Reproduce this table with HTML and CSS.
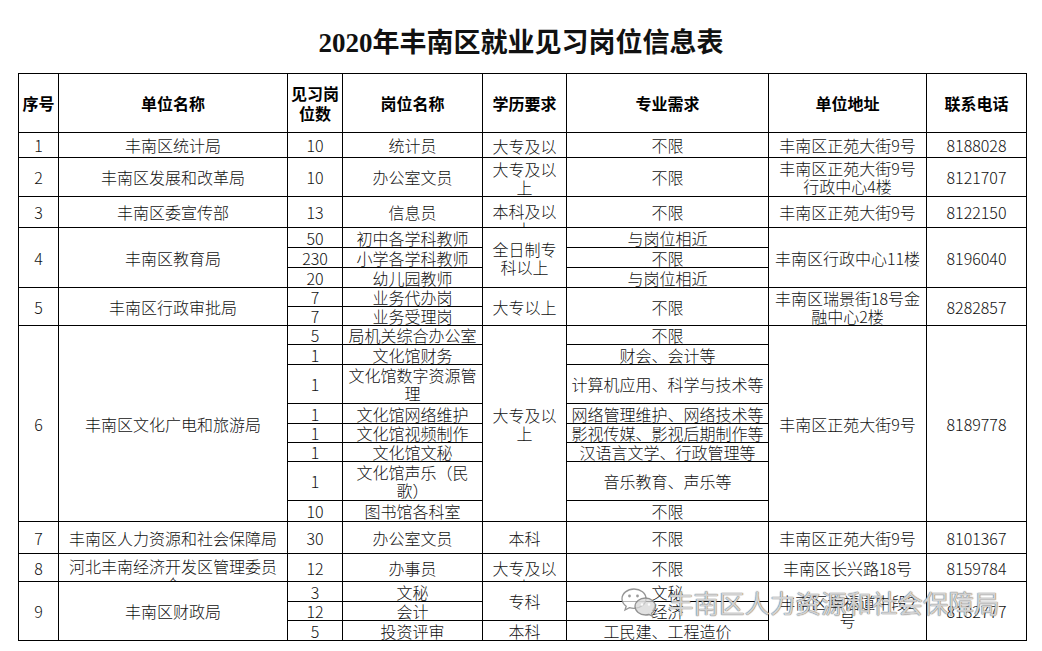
FILE: index.html
```html
<!DOCTYPE html>
<html lang="zh">
<head>
<meta charset="utf-8">
<title>2020年丰南区就业见习岗位信息表</title>
<link rel="stylesheet" href="styles.css">
</head>
<body>
<div class="page">
  <div class="title">2020年丰南区就业见习岗位信息表</div>
  <div class="sheet">
    <table>
      <colgroup>
        <col class="w-no"><col class="w-unit"><col class="w-num"><col class="w-pos"><col class="w-edu"><col class="w-major"><col class="w-addr"><col class="w-tel">
      </colgroup>
      <tr class="h59">
        <th>序号</th><th>单位名称</th><th>见习岗<br>位数</th><th>岗位名称</th><th>学历要求</th><th>专业需求</th><th>单位地址</th><th>联系电话</th>
      </tr>
      <tr class="h25">
        <td>1</td><td>丰南区统计局</td><td>10</td><td>统计员</td>
        <td><div class="clip c1">大专及以<br>上</div></td>
        <td>不限</td><td>丰南区正苑大街9号</td><td>8188028</td>
      </tr>
      <tr class="h39">
        <td>2</td><td>丰南区发展和改革局</td><td>10</td><td>办公室文员</td>
        <td><div class="clip c2">大专及以<br>上</div></td>
        <td>不限</td><td>丰南区正苑大街9号<br>行政中心4楼</td><td>8121707</td>
      </tr>
      <tr class="h31">
        <td>3</td><td>丰南区委宣传部</td><td>13</td><td>信息员</td>
        <td><div class="clip c3">本科及以<br>上</div></td>
        <td>不限</td><td>丰南区正苑大街9号</td><td>8122150</td>
      </tr>
      <tr class="h20">
        <td rowspan="3">4</td><td rowspan="3">丰南区教育局</td><td>50</td><td>初中各学科教师</td>
        <td rowspan="3">全日制专<br>科以上</td>
        <td>与岗位相近</td><td rowspan="3">丰南区行政中心11楼</td><td rowspan="3">8196040</td>
      </tr>
      <tr class="h20"><td>230</td><td>小学各学科教师</td><td>不限</td></tr>
      <tr class="h20"><td>20</td><td>幼儿园教师</td><td>与岗位相近</td></tr>
      <tr class="h19">
        <td rowspan="2">5</td><td rowspan="2">丰南区行政审批局</td><td>7</td><td>业务代办岗</td>
        <td rowspan="2">大专以上</td><td rowspan="2">不限</td>
        <td rowspan="2">丰南区瑞景街18号金<br>融中心2楼</td><td rowspan="2">8282857</td>
      </tr>
      <tr class="h19"><td>7</td><td>业务受理岗</td></tr>
      <tr class="h19">
        <td rowspan="8">6</td><td rowspan="8">丰南区文化广电和旅游局</td><td>5</td><td>局机关综合办公室</td>
        <td rowspan="8">大专及以<br>上</td>
        <td>不限</td><td rowspan="8">丰南区正苑大街9号</td><td rowspan="8">8189778</td>
      </tr>
      <tr class="h20"><td>1</td><td>文化馆财务</td><td>财会、会计等</td></tr>
      <tr class="h39"><td>1</td><td>文化馆数字资源管<br>理</td><td>计算机应用、科学与技术等</td></tr>
      <tr class="h20"><td>1</td><td>文化馆网络维护</td><td>网络管理维护、网络技术等</td></tr>
      <tr class="h19"><td>1</td><td>文化馆视频制作</td><td>影视传媒、影视后期制作等</td></tr>
      <tr class="h19"><td>1</td><td>文化馆文秘</td><td>汉语言文学、行政管理等</td></tr>
      <tr class="h39"><td>1</td><td>文化馆声乐（民<br>歌）</td><td>音乐教育、声乐等</td></tr>
      <tr class="h21"><td>10</td><td>图书馆各科室</td><td>不限</td></tr>
      <tr class="h32">
        <td>7</td><td>丰南区人力资源和社会保障局</td><td>30</td><td>办公室文员</td>
        <td>本科</td><td>不限</td><td>丰南区正苑大街9号</td><td>8101367</td>
      </tr>
      <tr class="h28">
        <td>8</td>
        <td><div class="clip c8u">河北丰南经济开发区管理委员<br>会</div></td>
        <td>12</td><td>办事员</td>
        <td><div class="clip c8">大专及以<br>上</div></td>
        <td>不限</td><td>丰南区长兴路18号</td><td>8159784</td>
      </tr>
      <tr class="h20">
        <td rowspan="3">9</td><td rowspan="3">丰南区财政局</td><td>3</td><td>文秘</td>
        <td rowspan="2">专科</td><td>文秘</td>
        <td rowspan="3">丰南区幸福道中段2<br>号</td><td rowspan="3">8182777</td>
      </tr>
      <tr class="h19"><td>12</td><td>会计</td><td>经济</td></tr>
      <tr class="h20"><td>5</td><td>投资评审</td><td>本科</td><td>工民建、工程造价</td></tr>
    </table>
  </div>
  <div class="wm">
    <svg class="wm-icon" width="38" height="30" viewBox="0 0 38 30">
      <path d="M14 2C7.4 2 2 6.4 2 11.8c0 3 1.6 5.6 4.2 7.4L5 23l4.4-2.3c1.4.4 3 .7 4.6.7 6.6 0 12-4.4 12-9.7S20.6 2 14 2z" fill="rgba(255,255,255,0.7)" stroke="rgba(130,130,130,0.85)" stroke-width="1.3"/>
      <path d="M25.5 11c-5.8 0-10.5 3.8-10.5 8.5S19.7 28 25.5 28c1.2 0 2.4-.2 3.5-.5l3.6 1.9-1-3.2c2.3-1.5 3.900-4 3.900-6.7 0-4.7-4.7-8.5-10-8.5z" fill="rgba(215,215,215,0.75)" stroke="rgba(130,130,130,0.85)" stroke-width="1.3"/>
      <circle cx="9.5" cy="9" r="1.4" fill="rgba(130,130,130,0.8)"/>
      <circle cx="17.5" cy="9" r="1.4" fill="rgba(130,130,130,0.8)"/>
      <circle cx="22" cy="17.5" r="1.2" fill="rgba(255,255,255,0.9)"/>
      <circle cx="29" cy="17.5" r="1.2" fill="rgba(255,255,255,0.9)"/>
    </svg>
    <span class="wm-text">丰南区人力资源和社会保障局</span>
  </div>
</div>
</body>
</html>
```
FILE: styles.css
```css
html, body {
  margin: 0;
  padding: 0;
  background: #ffffff;
}
body {
  font-family: "Noto Sans CJK SC", sans-serif;
  color: #000;
}
.page {
  position: relative;
  width: 1042px;
  height: 651px;
  overflow: hidden;
}
.title {
  height: 73px;
  box-sizing: border-box;
  padding-top: 28px;
  text-align: center;
  font-family: "Liberation Serif", "Noto Sans CJK SC", serif;
  font-weight: bold;
  font-size: 27px;
  line-height: 30px;
  color: #111;
}
.sheet {
  padding-left: 18px;
}
table {
  border-collapse: collapse;
  table-layout: fixed;
  width: 1008px;
  font-size: 16px;
  line-height: 18px;
}
.w-no { width: 40px; }
.w-unit { width: 229px; }
.w-num { width: 55px; }
.w-pos { width: 140px; }
.w-edu { width: 84px; }
.w-major { width: 202px; }
.w-addr { width: 158px; }
.w-tel { width: 100px; }
th, td {
  border: 1px solid #000;
  padding: 0 3px;
  text-align: center;
  vertical-align: middle;
  overflow: hidden;
  white-space: nowrap;
}
td {
  font-weight: 300;
  color: #111;
}
th {
  font-weight: bold;
  line-height: 20px;
}
tr.h59 { height: 59px; }
tr.h39 { height: 39px; }
tr.h32 { height: 32px; }
tr.h31 { height: 31px; }
tr.h28 { height: 28px; }
tr.h25 { height: 25px; }
tr.h21 { height: 21px; }
tr.h20 { height: 20px; }
tr.h19 { height: 19px; }
.clip {
  overflow: hidden;
  box-sizing: border-box;
}
.clip.c1 { height: 24px; padding-top: 4px; }
.clip.c2 { height: 38px; padding-top: 2px; }
.clip.c3 { height: 30px; padding-top: 5px; }
.clip.c8 { height: 27px; padding-top: 5px; }
.clip.c8u { height: 27px; padding-top: 3px; }
.wm {
  position: absolute;
  left: 620px;
  top: 585px;
  display: flex;
  align-items: center;
  gap: 10px;
  pointer-events: none;
}
.wm-text {
  font-size: 25.5px;
  line-height: 34px;
  color: rgba(255, 255, 255, 0.72);
  text-shadow: 0 0 1px rgba(90, 90, 90, 0.9), 0 0 1px rgba(90, 90, 90, 0.9);
}
```
